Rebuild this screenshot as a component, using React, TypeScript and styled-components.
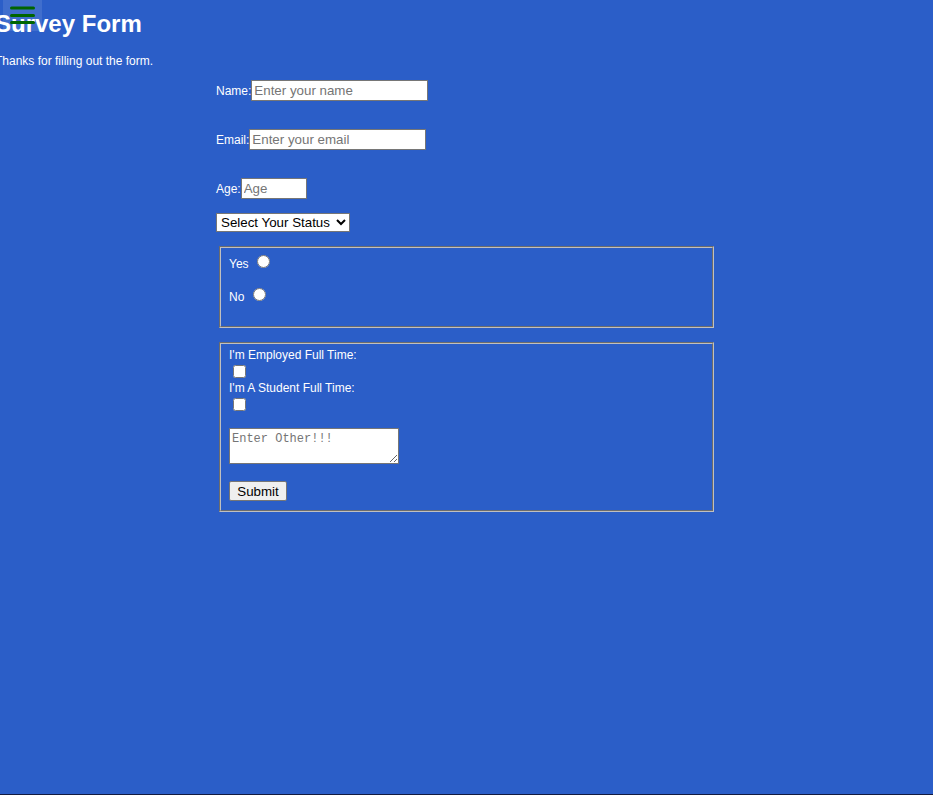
import React from "react";
import styled, { createGlobalStyle } from "styled-components";

const GlobalStyle = createGlobalStyle`
  html, body {
    margin: 0;
    padding: 0;
    background: #2b5ec8;
  }
  body {
    font-family: "Liberation Sans", Arial, sans-serif;
    color: #ffffff;
  }
  * { box-sizing: border-box; }
`;

const Page = styled.div`
  position: relative;
  min-height: 795px;
  border-bottom: 1px solid #121a40;
  overflow: hidden;
`;

const MenuButton = styled.div`
  position: absolute;
  top: 0;
  left: 3px;
  width: 39px;
  height: 31px;
  background: rgba(255, 255, 255, 0.1);
  z-index: 2;
  svg { display: block; }
`;

const Header = styled.header`
  padding-top: 10px;
`;

const Title = styled.h1`
  margin: 0 0 0 -5px;
  font-size: 24px;
  line-height: 28px;
  font-weight: bold;
`;

const Subtitle = styled.p`
  margin: 16px 0 0 -5px;
  font-size: 12px;
  line-height: 14px;
`;

const Form = styled.form`
  width: 501px;
  margin: 12px auto 0;
  font-size: 12px;
`;

const Row = styled.div<{ $gap: number }>`
  display: flex;
  align-items: baseline;
  margin-bottom: ${(p) => p.$gap}px;
`;

const Label = styled.label`
  font-size: 12px;
`;

const TextInput = styled.input<{ $w: number }>`
  width: ${(p) => p.$w}px;
  height: 21px;
  margin: 0;
  padding: 1px 2px;
  border: 1px solid #767676;
  border-radius: 0;
  background: #fff;
  font-family: "Liberation Sans", Arial, sans-serif;
  font-size: 13.33px;
  color: #000;
  &::placeholder { color: #757575; }
`;

const Select = styled.select`
  width: 134px;
  height: 19px;
  margin: 0;
  font-family: "Liberation Sans", Arial, sans-serif;
  font-size: 13.33px;
  color: #000;
  background: #fff;
  border: 1px solid #767676;
  border-radius: 0;
`;

const SelectRow = styled.div`
  margin-bottom: 14px;
  height: 19px;
`;

const Fieldset = styled.fieldset<{ $mb: number }>`
  margin: 0 3px ${(p) => p.$mb}px;
  padding: 4px 8px 8px;
  border: 2px groove #c0c0c0;
  min-width: 0;
`;

const Option = styled.div<{ $mb: number }>`
  line-height: 14px;
  margin-bottom: ${(p) => p.$mb}px;
  input {
    margin: 3px 3px 0 5px;
    width: 13px;
    height: 13px;
    vertical-align: baseline;
  }
`;

const CheckLabel = styled.div`
  line-height: 14px;
`;

const Checkbox = styled.input`
  display: block;
  width: 13px;
  height: 13px;
  margin: 3px 0 3px 4px;
`;

const TextArea = styled.textarea`
  display: block;
  width: 170px;
  height: 36px;
  margin: 17px 0 0;
  padding: 3px 2px 2px;
  border: 1px solid #767676;
  border-radius: 0;
  font-family: "Liberation Mono", monospace;
  font-size: 12px;
  resize: both;
  &::placeholder { color: #757575; }
`;

const SubmitButton = styled.button`
  display: block;
  width: 58px;
  height: 20px;
  margin: 17px 0 1px;
  padding: 1px 6px;
  background: #efefef;
  border: 1px solid #767676;
  border-radius: 2px;
  font-family: "Liberation Sans", Arial, sans-serif;
  font-size: 13.33px;
  color: #000;
`;

export default function App() {
  return (
    <>
      <GlobalStyle />
      <Page>
        <MenuButton>
          <svg width="39" height="31" viewBox="0 0 39 31">
            <g stroke="#006400" strokeWidth="3" strokeLinecap="round">
              <line x1="8.5" y1="8" x2="30.5" y2="8" />
              <line x1="8.5" y1="15.5" x2="30.5" y2="15.5" />
              <line x1="8.5" y1="22.5" x2="30.5" y2="22.5" />
            </g>
          </svg>
        </MenuButton>
        <Header>
          <Title>Survey Form</Title>
          <Subtitle>Thanks for filling out the form.</Subtitle>
        </Header>
        <Form onSubmit={(e) => e.preventDefault()}>
          <Row $gap={28}>
            <Label htmlFor="name">Name:</Label>
            <TextInput id="name" type="text" $w={177} placeholder="Enter your name" />
          </Row>
          <Row $gap={28}>
            <Label htmlFor="email">Email:</Label>
            <TextInput id="email" type="email" $w={177} placeholder="Enter your email" />
          </Row>
          <Row $gap={14}>
            <Label htmlFor="age">Age:</Label>
            <TextInput id="age" type="text" $w={66} placeholder="Age" />
          </Row>
          <SelectRow>
            <Select defaultValue="">
              <option value="">Select Your Status</option>
              <option value="single">Single</option>
              <option value="married">Married</option>
            </Select>
          </SelectRow>
          <Fieldset $mb={14}>
            <Option $mb={14}>
              Yes <input type="radio" name="yn" value="yes" />
            </Option>
            <Option $mb={14}>
              No <input type="radio" name="yn" value="no" />
            </Option>
          </Fieldset>
          <Fieldset $mb={0}>
            <CheckLabel>I'm Employed Full Time:</CheckLabel>
            <Checkbox type="checkbox" />
            <CheckLabel>I'm A Student Full Time:</CheckLabel>
            <Checkbox type="checkbox" />
            <TextArea placeholder="Enter Other!!!" />
            <SubmitButton type="submit">Submit</SubmitButton>
          </Fieldset>
        </Form>
      </Page>
    </>
  );
}
